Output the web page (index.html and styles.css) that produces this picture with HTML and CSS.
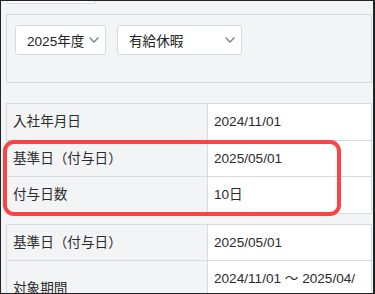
FILE: index.html
```html
<!DOCTYPE html>
<html lang="ja">
<head>
<meta charset="utf-8">
<title>有給休暇</title>
<link rel="stylesheet" href="styles.css">
</head>
<body>
<div class="frame">
  <div class="remnant"></div>
  <div class="panel">
    <div class="select select-year">
      <span>2025年度</span>
      <svg class="chev" width="10" height="6" viewBox="0 0 10 6"><path d="M1 1 L5 5 L9 1" fill="none" stroke="#7b8794" stroke-width="1.5" stroke-linecap="round" stroke-linejoin="round"/></svg>
    </div>
    <div class="select select-type">
      <span>有給休暇</span>
      <svg class="chev" width="10" height="6" viewBox="0 0 10 6"><path d="M1 1 L5 5 L9 1" fill="none" stroke="#7b8794" stroke-width="1.5" stroke-linecap="round" stroke-linejoin="round"/></svg>
    </div>
  </div>

  <div class="info">
    <div class="cell label">入社年月日</div>
    <div class="cell value">2024/11/01</div>
    <div class="cell label">基準日（付与日）</div>
    <div class="cell value">2025/05/01</div>
    <div class="cell label">付与日数</div>
    <div class="cell value">10日</div>
  </div>

  <div class="info info-second">
    <div class="cell label">基準日（付与日）</div>
    <div class="cell value">2025/05/01</div>
    <div class="cell label">対象期間</div>
    <div class="cell value">2024/11/01 ～ 2025/04/<wbr>30</div>
  </div>

  <div class="highlight"></div>
</div>
</body>
</html>
```

FILE: styles.css
```css
html, body {
  margin: 0;
  padding: 0;
  background: #1f1f1f;
}

.frame {
  position: relative;
  box-sizing: border-box;
  width: 375px;
  height: 294px;
  overflow: hidden;
  border: 1px solid #222222;
  border-right-width: 2px;
  padding: 0 1px 0 5px;
  background: #f3f4f6;
  font-family: "Liberation Sans", Arial, "Noto Sans CJK JP", sans-serif;
  font-size: 13.6px;
  color: #2b2b2b;
}

.remnant {
  box-sizing: border-box;
  margin-left: 1px;
  width: 89px;
  height: 3px;
  background: #ffffff;
  border: 1px solid #d6dbe1;
  border-top: none;
  border-radius: 0 0 4px 4px;
}

.panel {
  margin-top: 10px;
  border: 1px solid #d2dae2;
  padding: 10px 8px 27px;
  display: flex;
  gap: 11px;
}

.select {
  box-sizing: border-box;
  height: 30px;
  background: #ffffff;
  border: 1px solid #d6dae0;
  border-radius: 3px;
  display: flex;
  align-items: center;
  justify-content: space-between;
  padding: 0 6px 0 11px;
  color: #222222;
  font-size: 13.6px;
}

.select-year { width: 91px; }
.select-type { width: 125px; }

.chev { display: block; }

.info {
  margin-top: 20px;
  display: grid;
  grid-template-columns: 201px 1fr;
  border-top: 1px solid #d5dbe2;
  border-left: 1px solid #d5dbe2;
}

.info-second { margin-top: 10px; }

.cell {
  box-sizing: border-box;
  border-right: 1px solid #d5dbe2;
  border-bottom: 1px solid #d5dbe2;
  padding: 8px 5px 8px 6px;
  line-height: 19.5px;
  display: flex;
  align-items: center;
}

.label {
  background: #f3f4f6;
}

.value {
  background: #ffffff;
  display: block;
  align-self: stretch;
}

.highlight {
  position: absolute;
  left: 2px;
  top: 139px;
  width: 338px;
  height: 76px;
  box-sizing: border-box;
  border: 4px solid #f94345;
  border-radius: 11px;
  pointer-events: none;
}
```
